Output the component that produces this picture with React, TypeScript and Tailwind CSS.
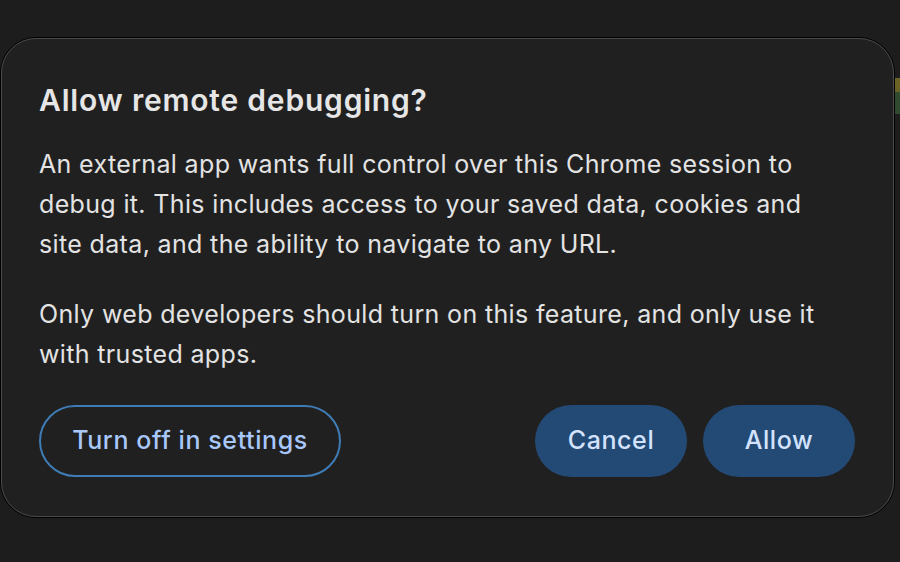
import React from "react";

export default function App() {
  return (
    <div
      className="w-[900px] h-[562px] overflow-hidden bg-[#1d1d1d] flex"
      style={{ fontFamily: "Inter, 'Noto Sans', sans-serif" }}
    >
      <div className="w-[895px] shrink-0 pt-[37px] pl-0">
        <div className="w-[895px] h-[481px] rounded-[36px] border border-black">
          <div className="h-full rounded-[35px] border border-[#4a4a4a] bg-[#202020] pl-[37px] pr-[38px] pt-[43px] flex flex-col">
            <h1 className="text-[30px] leading-[36px] font-semibold text-[#e6e6e6] tracking-[0.8px]">
              Allow remote debugging?
            </h1>
            <p className="mt-[26px] max-w-[800px] text-[25px] leading-[40px] text-[#e3e3e3] tracking-[0.35px]">
              An external app wants full control over this Chrome session to debug it. This includes access to your saved data, cookies and site data, and the ability to navigate to any URL.
            </p>
            <p className="mt-[30px] max-w-[800px] text-[25px] leading-[40px] text-[#e3e3e3] tracking-[0.35px]">
              Only web developers should turn on this feature, and only use it with trusted apps.
            </p>
            <div className="mt-[31px] flex items-center">
              <button className="h-[72px] w-[302px] rounded-full border-2 border-[#3f7cb5] text-[#a8c7fa] text-[25px] font-medium tracking-[0.6px]">
                Turn off in settings
              </button>
              <div className="flex-1" />
              <button className="h-[72px] w-[152px] rounded-full bg-[#234a75] text-[#d3e3fd] text-[25px] font-medium tracking-[0.6px]">
                Cancel
              </button>
              <button className="ml-[16px] h-[72px] w-[152px] rounded-full bg-[#234a75] text-[#d3e3fd] text-[25px] font-medium tracking-[0.6px]">
                Allow
              </button>
            </div>
          </div>
        </div>
      </div>
      <div className="flex-1 pt-[78px]">
        <div className="h-[14px] bg-[#6b6326]" />
        <div className="h-[22px] bg-[#2f4a2f]" />
      </div>
    </div>
  );
}
